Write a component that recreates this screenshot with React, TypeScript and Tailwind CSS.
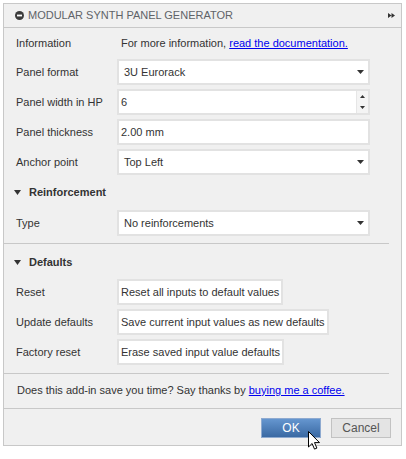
import React from 'react'

function SelectArrow() {
  return (
    <svg width="7" height="4" viewBox="0 0 7 4" className="shrink-0">
      <path d="M0 0h7L3.5 4z" fill="#333" />
    </svg>
  )
}

function Field({ label, children }: { label: string; children: React.ReactNode }) {
  return (
    <div className="flex h-[26px] items-center">
      <div className="w-[101px] shrink-0">{label}</div>
      {children}
    </div>
  )
}

function SelectBox({ value }: { value: string }) {
  return (
    <div className="flex h-[26px] w-[253px] items-center justify-between border-2 border-[#e2e2e2] bg-white pl-[5px] pr-[4px]">
      <span>{value}</span>
      <SelectArrow />
    </div>
  )
}

function TextBox({ value, spinner }: { value: string; spinner?: boolean }) {
  return (
    <div className="flex h-[26px] w-[253px] items-stretch border-2 border-[#e2e2e2] bg-white">
      <span className="flex flex-1 items-center pl-[2px]">{value}</span>
      {spinner && (
        <div className="flex w-[12px] flex-col border-l border-[#e6e6e6] bg-[#f4f4f4]">
          <div className="flex flex-1 items-center justify-center">
            <svg width="5" height="3" viewBox="0 0 5 3">
              <path d="M0 3h5L2.5 0z" fill="#333" />
            </svg>
          </div>
          <div className="flex flex-1 items-center justify-center">
            <svg width="5" height="3" viewBox="0 0 5 3">
              <path d="M0 0h5L2.5 3z" fill="#333" />
            </svg>
          </div>
        </div>
      )}
    </div>
  )
}

function ActionButton({ text }: { text: string }) {
  return (
    <div className="flex h-[26px] items-center border-2 border-[#e2e2e2] bg-white px-[2px] whitespace-nowrap">
      {text}
    </div>
  )
}

function SectionHeader({ title }: { title: string }) {
  return (
    <div className="flex h-[18px] items-center gap-[8px] pl-[10px] font-bold">
      <svg width="7" height="5" viewBox="0 0 7 5">
        <path d="M0 0h7L3.5 5z" fill="#333" />
      </svg>
      <span>{title}</span>
    </div>
  )
}

export default function App(): React.ReactElement {
  return (
    <div className="relative h-[459px] w-[406px] bg-white pl-[3px] pt-[3px] font-['Liberation_Sans',Arial,sans-serif] text-[11px] text-[#333]">
      <div className="flex h-[443px] w-[399px] flex-col border border-[#c8c8c8] bg-[#f0f0f0]">
        {/* Header */}
        <div className="flex h-[24px] shrink-0 items-center border-b border-[#c8c8c8] pl-[11px] pr-[6px]">
          <svg width="9" height="9" viewBox="0 0 9 9" className="mr-[4px]">
            <circle cx="4.5" cy="4.5" r="4.5" fill="#3c3c3c" />
            <rect x="2" y="3.6" width="5" height="1.8" fill="#fff" />
          </svg>
          <span className="text-[#5f6368] uppercase">Modular Synth Panel Generator</span>
          <svg width="7" height="5" viewBox="0 0 7 5" className="ml-auto">
            <path d="M0 0l3.5 2.5L0 5zM3.5 0L7 2.5 3.5 5z" fill="#333" />
          </svg>
        </div>

        {/* Body */}
        <div className="flex flex-col pt-[4px]">
          <div className="flex flex-col pl-[12px]">
            <div className="flex h-[22px] items-center">
              <div className="w-[105px] shrink-0">Information</div>
              <span>
                For more information,{' '}
                <span className="text-[#0000ee] underline">read the documentation.</span>
              </span>
            </div>
            <div className="mt-[5px] flex flex-col gap-[4px]">
              <Field label="Panel format">
                <SelectBox value="3U Eurorack" />
              </Field>
              <Field label="Panel width in HP">
                <TextBox value="6" spinner />
              </Field>
              <Field label="Panel thickness">
                <TextBox value="2.00 mm" />
              </Field>
              <Field label="Anchor point">
                <SelectBox value="Top Left" />
              </Field>
            </div>
          </div>

          <div className="mt-[8px]">
            <SectionHeader title="Reinforcement" />
          </div>
          <div className="mt-[9px] pl-[12px]">
            <Field label="Type">
              <SelectBox value="No reinforcements" />
            </Field>
          </div>
          <div className="mt-[7px] h-px w-[385px] bg-[#c8c8c8]" />

          <div className="mt-[9px]">
            <SectionHeader title="Defaults" />
          </div>
          <div className="mt-[8px] flex flex-col gap-[4px] pl-[12px]">
            <Field label="Reset">
              <ActionButton text="Reset all inputs to default values" />
            </Field>
            <Field label="Update defaults">
              <ActionButton text="Save current input values as new defaults" />
            </Field>
            <Field label="Factory reset">
              <ActionButton text="Erase saved input value defaults" />
            </Field>
          </div>
          <div className="mt-[8px] h-px w-[385px] bg-[#c8c8c8]" />

          <div className="mt-[8px] flex h-[16px] items-center pl-[13px]">
            <span>
              Does this add-in save you time? Say thanks by{' '}
              <span className="text-[#0000ee] underline">buying me a coffee.</span>
            </span>
          </div>
        </div>

        {/* Footer */}
        <div className="mt-auto flex h-[37px] shrink-0 justify-end gap-[10px] border-t border-[#c8c8c8] pr-[10px] pt-[9px]">
          <div className="flex h-[20px] w-[60px] items-center justify-center border border-[#8eaad0] bg-gradient-to-b from-[#6596cf] to-[#3a69a3] text-[12px] text-white">
            OK
          </div>
          <div className="flex h-[20px] w-[60px] items-center justify-center border border-[#c2c2c2] bg-[#e4e4e4] text-[12px] text-[#555]">
            Cancel
          </div>
        </div>
      </div>

      {/* Mouse cursor */}
      <svg width="13" height="20" viewBox="0 0 13 20" className="absolute left-[308px] top-[431px]">
        <path
          d="M0.5 0.5v15.5l3.6-3.5 2.4 5.6 2.4-1-2.4-5.5h5z"
          fill="#fff"
          stroke="#000"
          strokeWidth="1"
          strokeLinejoin="round"
        />
      </svg>
    </div>
  )
}
